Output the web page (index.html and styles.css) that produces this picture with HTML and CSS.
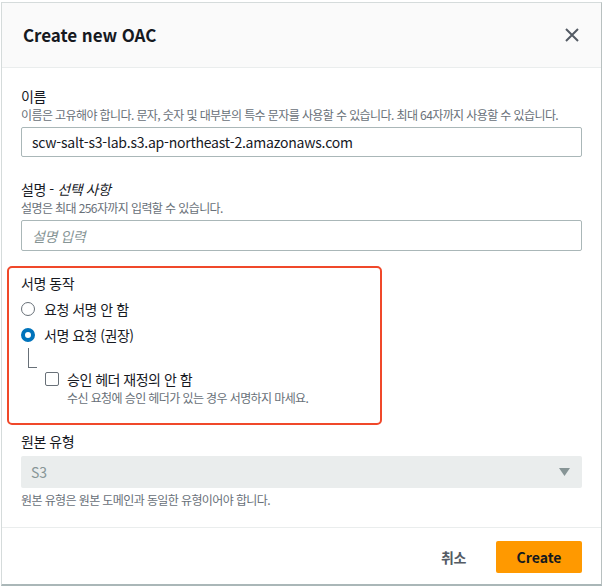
FILE: index.html
```html
<!DOCTYPE html>
<html lang="ko">
<head>
<meta charset="utf-8">
<title>Create new OAC</title>
<link rel="stylesheet" href="styles.css">
</head>
<body>
<div class="modal">
  <div class="modal-header">
    <h2 class="modal-title">Create new OAC</h2>
    <button class="close-btn" aria-label="닫기">
      <svg width="14" height="14" viewBox="0 0 14 14"><path d="M1 1 L13 13 M13 1 L1 13" stroke="#545b64" stroke-width="2" fill="none"/></svg>
    </button>
  </div>
  <div class="modal-body">
    <div class="field">
      <div class="label">이름</div>
      <div class="desc">이름은 고유해야 합니다. 문자, 숫자 및 대부분의 특수 문자를 사용할 수 있습니다. 최대 64자까지 사용할 수 있습니다.</div>
      <div class="input input-first">scw-salt-s3-lab.s3.ap-northeast-2.amazonaws.com</div>
    </div>
    <div class="field field-gap">
      <div class="label">설명 - <i>선택 사항</i></div>
      <div class="desc">설명은 최대 256자까지 입력할 수 있습니다.</div>
      <div class="input input-second placeholder">설명 입력</div>
    </div>
    <div class="highlight">
      <div class="label">서명 동작</div>
      <div class="radio-row">
        <span class="radio"></span>
        <span class="option-text">요청 서명 안 함</span>
      </div>
      <div class="radio-row">
        <span class="radio checked"></span>
        <span class="option-text">서명 요청 (권장)</span>
      </div>
      <div class="connector"></div>
      <div class="sub-option">
        <div class="check-row">
          <span class="checkbox"></span>
          <span class="option-text">승인 헤더 재정의 안 함</span>
        </div>
        <div class="desc sub-desc">수신 요청에 승인 헤더가 있는 경우 서명하지 마세요.</div>
      </div>
    </div>
    <div class="field origin">
      <div class="label">원본 유형</div>
      <div class="select">
        <span>S3</span>
        <svg width="11" height="8" viewBox="0 0 11 8"><path d="M0 0 H11 L5.5 8 Z" fill="#879596"/></svg>
      </div>
      <div class="desc origin-desc">원본 유형은 원본 도메인과 동일한 유형이어야 합니다.</div>
    </div>
  </div>
  <div class="modal-footer">
    <button class="btn-link">취소</button>
    <button class="btn-primary">Create</button>
  </div>
</div>
</body>
</html>
```
FILE: styles.css
```css
* { box-sizing: border-box; }
html, body {
  margin: 0;
  padding: 0;
  background: #ffffff;
}
body {
  font-family: "Noto Sans CJK KR", "Noto Sans", sans-serif;
  color: #16191f;
  font-size: 14px;
  padding: 2px 2px 0 1px;
}
.modal {
  width: 601px;
  border: 1px solid #d5dbdb;
  border-right-color: #b8c0c0;
  border-bottom: 2px solid #aab7b8;
  background: #fff;
}
.modal-header {
  height: 65px;
  background: #fafafa;
  border-bottom: 1px solid #eaeded;
  display: flex;
  align-items: center;
  justify-content: space-between;
  padding: 0 22px 0 21px;
}
.modal-title {
  margin: 0;
  font-size: 17px;
  font-weight: 700;
  line-height: 22px;
  color: #16191f;
  letter-spacing: -0.05px;
}
.close-btn {
  border: 0;
  background: none;
  padding: 0;
  display: flex;
  width: 14px;
  height: 14px;
}
.modal-body {
  padding: 18px 19px 19px 19px;
}
.label {
  font-size: 14px;
  line-height: 20px;
  color: #16191f;
  letter-spacing: -0.45px;
}
.label i { font-style: italic; }
.desc {
  font-size: 12px;
  line-height: 16px;
  color: #687078;
  margin-top: 1px;
  letter-spacing: -0.6px;
  white-space: nowrap;
}
.input {
  margin-top: 4px;
  border: 1px solid #aab7b8;
  border-radius: 2px;
  padding: 0 10px;
  font-size: 14px;
  display: flex;
  align-items: center;
  letter-spacing: -0.23px;
}
.input-first { height: 30px; }
.input-second { height: 31px; }
.placeholder {
  color: #879596;
  font-style: italic;
  letter-spacing: -0.45px;
}
.field-gap { margin-top: 22px; }
.highlight {
  margin-top: 15px;
  margin-left: -14px;
  width: 375px;
  border: 2px solid #f0482a;
  border-radius: 5px;
  padding: 5px 0 17px 12px;
}
.radio-row, .check-row {
  display: flex;
  align-items: center;
  height: 20px;
  margin-top: 6px;
}
.option-text {
  font-size: 14px;
  line-height: 20px;
  letter-spacing: -0.5px;
}
.radio {
  width: 14px;
  height: 14px;
  border-radius: 50%;
  border: 1.5px solid #687078;
  margin-right: 9px;
  flex: none;
}
.radio.checked {
  border: 4px solid #0073bb;
  background: #fff;
}
.connector {
  margin-top: 3px;
  margin-left: 7px;
  width: 9px;
  height: 20px;
  border-left: 1px solid #687078;
  border-bottom: 1px solid #687078;
}
.sub-option {
  padding-left: 24px;
}
.check-row { margin-top: 1px; }
.checkbox {
  width: 14px;
  height: 14px;
  border: 1.5px solid #687078;
  border-radius: 2px;
  margin-right: 8px;
  flex: none;
}
.sub-desc {
  margin-top: 1px;
  padding-left: 22px;
}
.origin { margin-top: 6px; }
.select {
  margin-top: 5px;
  height: 32px;
  background: #eaeded;
  border-radius: 2px;
  display: flex;
  align-items: center;
  justify-content: space-between;
  padding: 0 12px 0 10px;
  color: #879596;
  font-size: 14px;
}
.origin-desc { margin-top: 4px; }
.modal-footer {
  border-top: 1px solid #eaeded;
  display: flex;
  justify-content: flex-end;
  align-items: center;
  padding: 13px 19px 11px 19px;
  gap: 10px;
}
.btn-link {
  border: 0;
  background: none;
  font-family: inherit;
  font-size: 14px;
  font-weight: 700;
  color: #545b64;
  padding: 0 20px;
  height: 32px;
  letter-spacing: -0.4px;
}
.btn-primary {
  border: 0;
  background: #ff9900;
  font-family: inherit;
  font-size: 14px;
  font-weight: 700;
  color: #16191f;
  height: 32px;
  width: 86px;
  border-radius: 2px;
}
```
